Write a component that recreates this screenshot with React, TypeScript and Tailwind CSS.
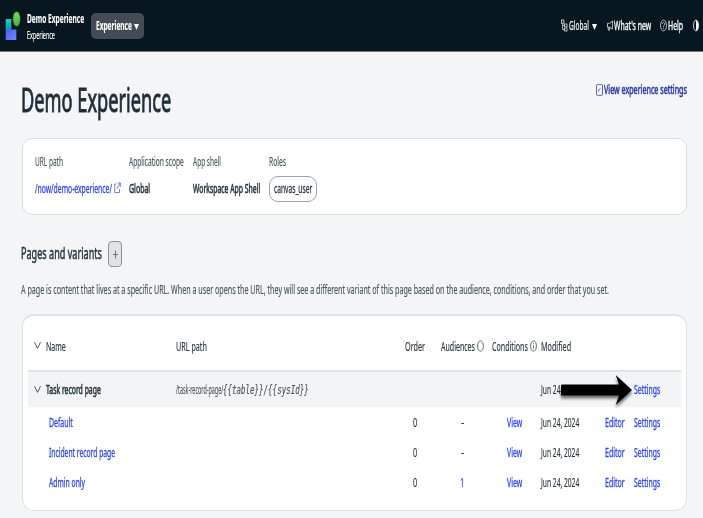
import { useLayoutEffect, useRef, useState } from "react";
import type { ReactNode } from "react";

/** Condensed single-line text: squeezes its content horizontally to the width of its box. */
function Fit({ className, children }: { className: string; children: ReactNode }) {
  const box = useRef<HTMLSpanElement>(null);
  const inner = useRef<HTMLSpanElement>(null);
  const [scale, setScale] = useState(0.63);
  useLayoutEffect(() => {
    if (box.current && inner.current) {
      setScale(box.current.clientWidth / inner.current.offsetWidth);
    }
  }, [children]);
  return (
    <span ref={box} className={`block shrink-0 whitespace-nowrap ${className}`}>
      <span ref={inner} className="inline-block origin-left" style={{ transform: `scaleX(${scale})` }}>
        {children}
      </span>
    </span>
  );
}

function Chevron() {
  return (
    <svg className="h-[9px] w-[7px] shrink-0" viewBox="0 0 7 9" fill="none" stroke="#3c4a50" strokeWidth="0.9">
      <path d="M0.5 1.2 3.5 7.4 6.5 1.2" />
    </svg>
  );
}

function Info({ dot }: { dot?: boolean }) {
  return (
    <svg className="h-[13px] w-[7px] shrink-0" viewBox="0 0 7 13" fill="none" stroke="#3c4a50" strokeWidth="0.8">
      <ellipse cx="3.5" cy="7" rx="2.9" ry="5.2" />
      {dot && <path d="M3.5 6.3V9.5M3.5 4.3v1" />}
    </svg>
  );
}

function Header() {
  return (
    <header className="flex h-[52px] items-center border-b border-[#737b81] bg-[#07161f] pl-[5px] pr-[4px] text-white">
      <svg className="h-[30px] w-[16px] shrink-0" viewBox="0 0 16 30">
        <defs>
          <linearGradient id="teal" x1="0" y1="0" x2="0" y2="1">
            <stop offset="0" stopColor="#16d3cf" />
            <stop offset="1" stopColor="#0898a0" />
          </linearGradient>
          <linearGradient id="blue" x1="0" y1="0" x2="1" y2="1">
            <stop offset="0" stopColor="#4b5ef0" />
            <stop offset="1" stopColor="#7286ff" />
          </linearGradient>
          <linearGradient id="green" x1="0" y1="0" x2="0" y2="1">
            <stop offset="0" stopColor="#78d95c" />
            <stop offset="1" stopColor="#46ad45" />
          </linearGradient>
        </defs>
        <rect x="0.7" y="8" width="5.6" height="11" fill="url(#teal)" />
        <rect x="0.7" y="18.5" width="10.6" height="10.5" fill="url(#blue)" />
        <ellipse cx="11.6" cy="8" rx="3.9" ry="7.4" fill="url(#green)" stroke="#07161f" strokeWidth="0.5" />
      </svg>
      <div className="ml-[6px]">
        <Fit className="mt-[2px] w-[57px] text-[12.5px] font-bold leading-[16px]">Demo Experience</Fit>
        <Fit className="w-[28px] text-[11px] leading-[15px]">Experience</Fit>
      </div>
      <button className="ml-[7px] flex h-[26px] w-[53px] items-center rounded-[5px] bg-[#434c54] pl-[5px]">
        <Fit className="w-[36px] text-[12px] font-bold leading-[26px]">Experience</Fit>
        <svg className="ml-[1.5px] mt-[2px] h-[6px] w-[5px]" viewBox="0 0 5 6" fill="white">
          <path d="M0 0H5L2.5 6Z" />
        </svg>
      </button>
      <div className="ml-auto flex h-[26px] items-center">
        <svg className="h-[13px] w-[7px]" viewBox="0 0 7 13" fill="none" stroke="#dfe3e6" strokeWidth="0.8">
          <rect x="0.5" y="1" width="2.4" height="3.2" />
          <path d="M1.6 4.2V10.5H3.6M1.6 6.3H3.6" />
          <rect x="3.6" y="5" width="2.4" height="2.8" />
          <rect x="3.6" y="9" width="2.4" height="3" />
        </svg>
        <Fit className="ml-px w-[20px] text-[12.5px] leading-[26px]">Global</Fit>
        <svg className="ml-[3px] mt-[2px] h-[6px] w-[5px]" viewBox="0 0 5 6" fill="white">
          <path d="M0 0H5L2.5 6Z" />
        </svg>
        <svg className="ml-[10px] h-[13px] w-[6px]" viewBox="0 0 6 13" fill="none" stroke="#dfe3e6" strokeWidth="0.8">
          <path d="M0.5 4.3H2.6L5.4 2V10.2L2.6 8.2H0.5ZM1.3 8.2V11.2H2.6V8.2" />
        </svg>
        <Fit className="ml-px w-[37px] text-[12.5px] leading-[26px] [-webkit-text-stroke:0.35px]">What's new</Fit>
        <svg className="ml-[9px] h-[13px] w-[7px]" viewBox="0 0 7 13" fill="none" stroke="#dfe3e6" strokeWidth="0.8">
          <ellipse cx="3.5" cy="6.5" rx="3" ry="5.4" />
          <path d="M2.4 5C2.4 3 4.7 3 4.7 5 4.7 6.3 3.5 6.3 3.5 7.8M3.5 8.8v1" />
        </svg>
        <Fit className="ml-px w-[15px] text-[12.5px] leading-[26px] [-webkit-text-stroke:0.35px]">Help</Fit>
        <svg className="ml-[10px] h-[13px] w-[6px]" viewBox="0 0 6 13">
          <ellipse cx="3" cy="6.5" rx="2.5" ry="5.4" fill="none" stroke="white" strokeWidth="0.8" />
          <path d="M3 1.1A2.5 5.4 0 0 1 3 11.9Z" fill="white" />
        </svg>
      </div>
    </header>
  );
}

const columns =
  "grid grid-cols-[148px_229px_36px_51px_49px_64px_29px_46px] items-center text-[13px] leading-[20px]";

const link = "text-[#2a40f5] [-webkit-text-stroke:0.3px]";

const variants = [
  { name: "Default", width: "w-[24px]", audience: "-" },
  { name: "Incident record page", width: "w-[66px]", audience: "-" },
  { name: "Admin only", width: "w-[36px]", audience: "1" },
];

function Arrow() {
  return (
    <svg className="absolute left-[529px] top-0 h-[42px] w-[80px] overflow-visible" viewBox="0 0 80 42">
      <defs>
        <filter id="shadow" x="-10%" y="-20%" width="120%" height="160%">
          <feDropShadow dx="0" dy="3" stdDeviation="1.8" floodColor="#000" floodOpacity="0.55" />
        </filter>
      </defs>
      <path
        filter="url(#shadow)"
        d="M5 12.5H62L58.7 3 75 18 58.7 33 62 23.5H5Q4 23.5 4 22V14Q4 12.5 5 12.5Z"
        fill="#000"
      />
    </svg>
  );
}

function VariantTable() {
  return (
    <section className="mt-[15px] h-[197px] rounded-[12px] border border-t-2 border-[#dfe2e4] bg-white px-[5px]">
      <div className={`${columns} h-[56px] border-b-2 border-[#e0e2e4] pt-[5px] text-[#26353b]`}>
        <div className="flex items-center pl-[6px]">
          <Chevron />
          <Fit className="ml-[5px] w-[20px]">Name</Fit>
        </div>
        <Fit className="w-[31px]">URL path</Fit>
        <Fit className="w-[20px]">Order</Fit>
        <div className="flex items-center">
          <Fit className="w-[34px]">Audiences</Fit>
          <span className="ml-[2px]">
            <Info />
          </span>
        </div>
        <div className="flex items-center">
          <Fit className="w-[36px]">Conditions</Fit>
          <span className="ml-[2px]">
            <Info dot />
          </span>
        </div>
        <Fit className="w-[30px]">Modified</Fit>
      </div>
      <div className={`${columns} relative h-[35px] bg-[#f3f4f6] pb-px text-[#26353b]`}>
        <div className="flex items-center pl-[6px]">
          <Chevron />
          <Fit className="ml-[5px] w-[55px] [-webkit-text-stroke:0.6px]">Task record page</Fit>
        </div>
        <div className="flex items-center text-[#46555b]">
          <Fit className="w-[47px]">/task-record-page/</Fit>
          <Fit className="w-[86px] pt-px font-['DejaVu_Sans_Mono',monospace] text-[11.5px] italic">
            {"{{table}}/{{sysId}}"}
          </Fit>
        </div>
        <span />
        <span />
        <span />
        <Fit className="w-[38px]">Jun 24, 2024</Fit>
        <span />
        <Fit className={`w-[26px] ${link}`}>Settings</Fit>
        <Arrow />
      </div>
      {variants.map((v) => (
        <div key={v.name} className={`${columns} h-[30px] text-[#26353b]`}>
          <div className={`pl-[21px] ${link}`}>
            <Fit className={v.width}>{v.name}</Fit>
          </div>
          <span />
          <Fit className="ml-[8px] w-[4px]">0</Fit>
          {v.audience === "1" ? (
            <Fit className="ml-[19px] w-[4px] text-[#2a40f5]">1</Fit>
          ) : (
            <Fit className="ml-[20px] w-[3px]">-</Fit>
          )}
          <Fit className={`ml-[15px] w-[15px] ${link}`}>View</Fit>
          <Fit className="w-[38px]">Jun 24, 2024</Fit>
          <Fit className={`w-[20px] ${link}`}>Editor</Fit>
          <Fit className={`w-[26px] ${link}`}>Settings</Fit>
        </div>
      ))}
    </section>
  );
}

export default function App() {
  return (
    <div className="h-[518px] w-[703px] overflow-hidden bg-[#f4f5f7] font-['Noto_Sans','Open_Sans',sans-serif] text-[#26353b] [-webkit-text-stroke:0.15px]">
      <Header />
      <main className="pl-[22px] pr-[16px]">
        <div className="flex h-[86px] items-start justify-between">
          <Fit className="-ml-px mt-[27px] w-[150px] text-[32.5px] leading-[42px] text-[#1f2e35] [-webkit-text-stroke:1px]">
            Demo Experience
          </Fit>
          <a className="mt-[28px] flex h-[20px] items-center text-[#2c3aa8]">
            <svg className="h-[12px] w-[7px]" viewBox="0 0 7 12" fill="none" stroke="#4a57b8" strokeWidth="0.9">
              <rect x="0.5" y="0.6" width="6" height="10.8" rx="1" />
              <path d="M2.6 7.5V5.8L4.4 4.6" />
            </svg>
            <Fit className="ml-px w-[83px] text-[12.5px] leading-[20px] [-webkit-text-stroke:0.6px]">
              View experience settings
            </Fit>
          </a>
        </div>
        <section className="flex h-[77px] rounded-[10px] border border-[#d9dcdf] bg-white pl-[12px] pt-[12px] text-[13px] leading-[20px]">
          <div className="w-[94px]">
            <Fit className="w-[28px] text-[#46555b]">URL path</Fit>
            <div className={`mt-[7px] flex items-center ${link}`}>
              <Fit className="w-[77px]">/now/demo-experience/</Fit>
              <svg className="ml-[2px] h-[12px] w-[7px]" viewBox="0 0 7 12" fill="none" stroke="#4c5ee6" strokeWidth="0.8">
                <path d="M2.6 2H0.7V10.6H5.5V7M4 1H6.3V5M6.3 1 3 6.7" />
              </svg>
            </div>
          </div>
          <div className="w-[64px]">
            <Fit className="w-[55px] text-[#46555b]">Application scope</Fit>
            <Fit className="mt-[7px] w-[21px] [-webkit-text-stroke:0.6px]">Global</Fit>
          </div>
          <div className="w-[76px]">
            <Fit className="w-[28px] text-[#46555b]">App shell</Fit>
            <Fit className="mt-[7px] w-[67px] [-webkit-text-stroke:0.6px]">Workspace App Shell</Fit>
          </div>
          <div>
            <Fit className="w-[17px] text-[#46555b]">Roles</Fit>
            <div className="mt-[5px] flex h-[26px] w-[48px] items-center rounded-[9px] border border-[#9aa3a8] pb-[2px] pl-[4px]">
              <Fit className="w-[38px] [-webkit-text-stroke:0.3px]">canvas_user</Fit>
            </div>
          </div>
        </section>
        <div className="mt-[26px] flex h-[26px] items-center">
          <Fit className="-ml-px -mt-[3px] w-[81px] text-[15.5px] leading-[24px] [-webkit-text-stroke:0.5px]">
            Pages and variants
          </Fit>
          <button className="ml-[6px] flex h-[26px] w-[14px] items-center justify-center rounded-[4px] border border-[#8b9498] bg-[#e1e4e6]">
            <svg className="h-[9px] w-[5px]" viewBox="0 0 5 9" fill="none" stroke="#69757a">
              <path d="M2.5 0.5V8.5M0 4.5H5" />
            </svg>
          </button>
        </div>
        <Fit className="-ml-px mt-[12px] w-[588px] text-[13px] leading-[20px] text-[#46555b]">
          A page is content that lives at a specific URL. When a user opens the URL, they will see a different variant
          of this page based on the audience, conditions, and order that you set.
        </Fit>
        <VariantTable />
      </main>
    </div>
  );
}
